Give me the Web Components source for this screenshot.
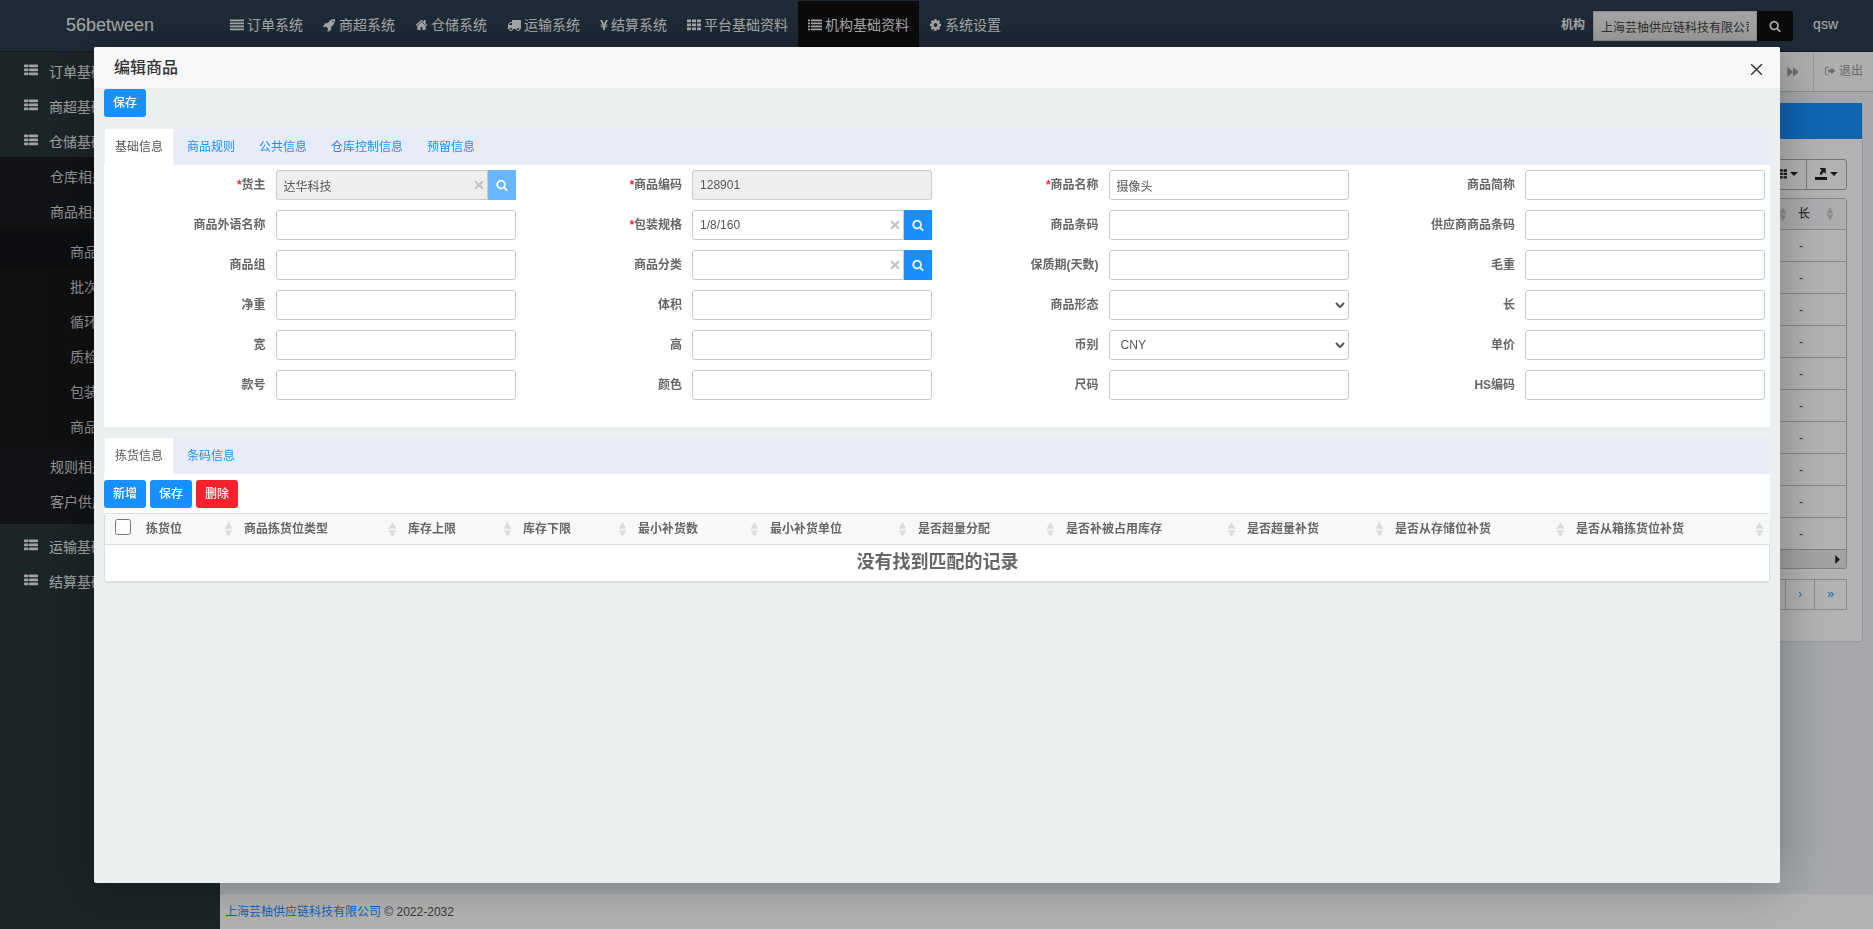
<!DOCTYPE html>
<html lang="zh-CN">
<head>
<meta charset="utf-8">
<title>编辑商品</title>
<style>
  html, body { margin: 0; height: 100%; }
  body {
    font: 12px/18px "Liberation Sans", "Noto Sans CJK SC", sans-serif;
    color: #555;
    overflow: hidden;
  }
</style>
</head>
<body>
<wms-app></wms-app>

<script>
const ICONS = {
  lines: '<path d="M0 192h1792v224H0zM0 576h1792v224H0zM0 960h1792v224H0zM0 1344h1792v224H0z"/>',
  rocket: '<path d="M1440 448q0-40-28-68t-68-28-68 28-28 68 28 68 68 28 68-28 28-68zm224-288q0 249-75.5 430.5t-253.5 360.5q-81 80-195 176l-20 379q-2 16-16 26l-384 224q-7 4-16 4-12 0-23-9l-64-64q-13-14-8-32l85-276-281-281-276 85q-3 1-9 1-14 0-23-9l-64-64q-17-19-5-39l224-384q10-14 26-16l379-20q96-114 176-195 188-187 358-258t431-71q14 0 24 9.5t10 22.5z"/>',
  home: '<path d="M1472 992v480q0 26-19 45t-45 19h-384v-384h-256v384h-384q-26 0-45-19t-19-45v-480q0-1 .5-3t.5-3l575-474 575 474q1 2 1 6zm223-69l-62 74q-8 9-21 11h-3q-13 0-21-7l-692-577-692 577q-12 8-24 7-13-2-21-11l-62-74q-8-10-7-23.5t11-21.5l719-599q32-26 76-26t76 26l244 204v-195q0-14 9-23t23-9h192q14 0 23 9t9 23v408l219 182q10 8 11 21.5t-7 23.5z"/>',
  truck: '<path d="M640 1408q0-52-38-90t-90-38-90 38-38 90 38 90 90 38 90-38 38-90zm-384-512h384v-256h-158q-13 0-22 9l-195 195q-9 9-9 22v30zm1280 512q0-52-38-90t-90-38-90 38-38 90 38 90 90 38 90-38 38-90zm256-1088v1024q0 15-4 26.5t-13.5 18.5-16.5 11.5-23.5 6-22.5 2-25.5 0-22.5-.5q0 106-75 181t-181 75-181-75-75-181h-384q0 106-75 181t-181 75-181-75-75-181h-64q-3 0-22.5.5t-25.5 0-22.5-2-23.5-6-16.5-11.5-13.5-18.5-4-26.5q0-26 19-45t45-19v-320q0-8-.5-35t0-38 2.5-34.5 6.5-37 14-30.5 22.5-30l198-198q19-19 50.5-32t58.5-13h160v-192q0-26 19-45t45-19h1024q26 0 45 19t19 45z"/>',
  yen: '<path d="M0 160h440l456 560 456-560h440l-560 650h390v150h-500v120h500v150h-500v402H660v-402H160v-150h500V960H160V810h400z"/>',
  grid: '<path d="M0 192h512v352H0zM640 192h512v352H640zM1280 192h512v352h-512zM0 704h512v352H0zM640 704h512v352H640zM1280 704h512v352h-512zM0 1216h512v352H0zM640 1216h512v352H640zM1280 1216h512v352h-512z"/>',
  list: '<path d="M0 192h256v224H0zM384 192h1408v224H384zM0 576h256v224H0zM384 576h1408v224H384zM0 960h256v224H0zM384 960h1408v224H384zM0 1344h256v224H0zM384 1344h1408v224H384z"/>',
  cog: '<path d="M1152 896q0-106-75-181t-181-75-181 75-75 181 75 181 181 75 181-75 75-181zm512-109v222q0 12-8 23t-20 13l-185 28q-19 54-39 91 35 50 107 138 10 12 10 25t-9 23q-27 37-99 108t-94 71q-12 0-26-9l-138-108q-44 23-91 38-16 136-29 186-7 28-36 28h-222q-14 0-24.5-8.5t-11.5-21.5l-28-184q-49-16-90-37l-141 107q-10 9-25 9-14 0-25-11-126-114-165-168-7-10-7-23 0-12 8-23 15-21 51-66.5t54-70.5q-27-50-41-99l-183-27q-13-2-21-12.5t-8-23.5v-222q0-12 8-23t19-13l186-28q14-46 39-92-40-57-107-138-10-12-10-24 0-10 9-23 26-36 98.5-107.5t94.5-71.5q13 0 26 10l138 107q44-23 91-38 16-136 29-186 7-28 36-28h222q14 0 24.5 8.5t11.5 21.5l28 184q49 16 90 37l142-107q9-9 24-9 13 0 25 10 129 119 165 170 7 8 7 22 0 12-8 23-15 21-51 66.5t-54 70.5q26 50 41 98l183 28q13 2 21 12.5t8 23.5z"/>',
  thlist: '<path d="M96 192h384q96 0 96 96v160q0 96-96 96H96q-96 0-96-96V288q0-96 96-96zM736 192h960q96 0 96 96v160q0 96-96 96H736q-96 0-96-96V288q0-96 96-96zM96 704h384q96 0 96 96v160q0 96-96 96H96q-96 0-96-96V800q0-96 96-96zM736 704h960q96 0 96 96v160q0 96-96 96H736q-96 0-96-96V800q0-96 96-96zM96 1216h384q96 0 96 96v160q0 96-96 96H96q-96 0-96-96v-160q0-96 96-96zM736 1216h960q96 0 96 96v160q0 96-96 96H736q-96 0-96-96v-160q0-96 96-96z"/>',
  search: '<path d="M1216 832q0-185-131.5-316.5t-316.5-131.5-316.5 131.5-131.5 316.5 131.5 316.5 316.5 131.5 316.5-131.5 131.5-316.5zm512 832q0 52-38 90t-90 38q-54 0-90-38l-343-342q-179 124-399 124-143 0-273.5-55.5t-225-150-150-225-55.5-273.5 55.5-273.5 150-225 225-150 273.5-55.5 273.5 55.5 225 150 150 225 55.5 273.5q0 220-124 399l343 343q37 37 37 90z"/>',
  forward: '<path d="M64 192l832 704-832 704zM896 192l832 704-832 704z"/>',
  exit: '<path d="M700 1400v130H420q-290 0-290-290V560q0-290 290-290h280v130H420q-150 0-150 160v680q0 160 150 160z"/><path d="M1700 896l-620 540v-310H640V666h440V356z"/>',
  remove: '<path d="M320 96l576 520 576-520 260 260-536 540 536 540-260 260-576-520-576 520-260-260 536-540L60 356z"/>',
  close: '<path d="M160 160L1632 1632M1632 160L160 1632" fill="none" stroke="currentColor" stroke-width="190"/>',
  down: '<path d="M0 448h1792L896 1344z"/>',
  right: '<path d="M448 0v1792L1344 896z"/>',
  export: '<path d="M0 1344h1792v448H0zM704 0h896v896l-288-288-160 160 -128 224H680V960l144-64-120-200 288-288z"/>',
  sorter: '<path d="M896 0l800 820H96zM96 972h1600L896 1792z"/>'
};

function define(name, render) {
  customElements.define(name, class extends HTMLElement {
    connectedCallback() {
      if (this.shadowRoot) return;
      const template = document.createElement('template');
      template.innerHTML = render(this);
      this.attachShadow({ mode: 'open' }).append(template.content.cloneNode(true));
    }
  });
}

define('ui-icon', el => `
  <style>
    :host { display: inline-block; flex: none; width: 14px; height: 14px; }
    svg { display: block; width: 100%; height: 100%; fill: currentColor; }
  </style>
  <svg viewBox="0 0 1792 1792" preserveAspectRatio="none" aria-hidden="true">${ICONS[el.getAttribute('name')]}</svg>`);

define('nav-item', el => `
  <style>
    :host { display: block; }
    a {
      display: flex; align-items: center; gap: 3px; height: 51px; padding: 0 10px 3px;
      box-sizing: border-box;
      color: #f3f3f3; font-size: 14px; text-decoration: none; white-space: nowrap;
    }
    :host([active]) a { background: #111; }
    ui-icon[name=yen] { width: 8px; height: 12px; }
    ui-icon[name=rocket], ui-icon[name=home], ui-icon[name=cog] { width: 13px; height: 14px; }
  </style>
  <a href="#"><ui-icon name="${el.getAttribute('icon')}"></ui-icon><slot></slot></a>`);

define('app-header', () => `
  <style>
    :host {
      display: flex; height: 52px; box-sizing: border-box; padding-top: 1px;
      background: #2c3e50; border-bottom: 1px solid #1b2733;
    }
    .brand {
      width: 220px; flex: none; text-align: center; line-height: 48px;
      font-size: 18px; color: #f3f3f3; text-decoration: none;
    }
    nav { display: flex; flex: 1; }
    form { display: flex; margin: 10px 20px 0 0; height: 30px; }
    label { font-weight: bold; color: #f3f3f3; line-height: 28px; margin-right: 8px; }
    input {
      width: 164px; height: 30px; box-sizing: border-box; border: 1px solid #ccc;
      padding: 0 7px; background: #eee; color: #444; font: inherit;
    }
    button {
      width: 36px; border: 0; padding: 0; background: #111; color: #fff;
      border-radius: 0 3px 3px 0; display: grid; place-items: center;
    }
    button ui-icon { width: 12px; height: 12px; }
    .user { margin-right: 35px; line-height: 46px; font-size: 14px; color: #f3f3f3; text-decoration: none; }
  </style>
  <a class="brand" href="#">56between</a>
  <nav>
    <nav-item icon="lines">订单系统</nav-item>
    <nav-item icon="rocket">商超系统</nav-item>
    <nav-item icon="home">仓储系统</nav-item>
    <nav-item icon="truck">运输系统</nav-item>
    <nav-item icon="yen">结算系统</nav-item>
    <nav-item icon="grid">平台基础资料</nav-item>
    <nav-item icon="list" active>机构基础资料</nav-item>
    <nav-item icon="cog">系统设置</nav-item>
  </nav>
  <form>
    <label for="org">机构</label>
    <input id="org" value="上海芸柚供应链科技有限公司">
    <button type="button" aria-label="搜索"><ui-icon name="search"></ui-icon></button>
  </form>
  <a class="user" href="#">qsw</a>`);

define('side-item', el => `
  <style>
    :host { display: block; }
    a {
      display: flex; align-items: center; gap: 11px; height: 35px; padding: 4px 0 0 24px;
      box-sizing: border-box; color: #e6e6e6; font-size: 14px; text-decoration: none;
    }
    :host([level="2"]) a { padding-left: 50px; color: #d8d8d8; }
    :host([level="3"]) a { padding-left: 70px; color: #d0d0d0; }
    :host([active]) a { background: #121419; }
    ui-icon { margin-bottom: 3px; }
  </style>
  <a href="#">${el.hasAttribute('level') ? '' : '<ui-icon name="thlist"></ui-icon>'}<slot></slot></a>`);

define('side-nav', () => `
  <style>
    :host { display: block; background: #283438; }
    .sub { background: #191b20; padding-bottom: 7px; margin-bottom: 3px; }
    .leaf { background: #171717; padding: 5px 0; }
  </style>
  <nav>
    <side-item>订单基础</side-item>
    <side-item>商超基础</side-item>
    <side-item>仓储基础</side-item>
    <div class="sub">
      <side-item level="2">仓库相关</side-item>
      <side-item level="2">商品相关</side-item>
      <div class="leaf">
        <side-item level="3" active>商品</side-item>
        <side-item level="3">批次</side-item>
        <side-item level="3">循环</side-item>
        <side-item level="3">质检</side-item>
        <side-item level="3">包装</side-item>
        <side-item level="3">商品</side-item>
      </div>
      <side-item level="2">规则相关</side-item>
      <side-item level="2">客户供应</side-item>
    </div>
    <side-item>运输基础</side-item>
    <side-item>结算基础</side-item>
  </nav>`);

define('list-page', () => `
  <style>
    :host { display: flex; flex-direction: column; min-width: 0; background: #ecf0f5; }
    .tabs {
      display: flex; justify-content: flex-end; height: 39px; background: #fafafa;
      border-bottom: 1px solid #ccc; color: #999;
    }
    .tabs button, .tabs a {
      display: flex; align-items: center; gap: 3px; border: 0; background: none;
      color: inherit; font: inherit; text-decoration: none; padding: 0 10px;
    }
    .tabs button { width: 48px; justify-content: flex-end; padding-right: 14px; }
    .tabs ui-icon { width: 12px; height: 12px; }
    .tabs a { border-left: 1px solid #ddd; padding-bottom: 2px; }
    .card { margin: 11px 10px 0 15px; background: #fff; padding-bottom: 31px; border-radius: 3px; border: solid #ddd; border-width: 0 1px 1px 0; }
    .banner { height: 36px; background: #1890ff; }
    .body { padding: 20px 15px 0; }
    .tools { display: flex; justify-content: flex-end; }
    .tools button {
      display: flex; align-items: center; justify-content: center; gap: 3px; width: 41px; height: 31px;
      background: #fff; border: 1px solid #aaa; margin-left: -1px; padding: 0 0 2px; color: #222;
    }
    .tools button:last-child { border-radius: 0 3px 3px 0; }
    .tools ui-icon { width: 12px; height: 12px; }
    .tools ui-icon[name=down] { width: 8px; height: 8px; }
    .frame { margin-top: 8px; border: 1px solid #bbb; border-radius: 3px; }
    table { width: 100%; border-collapse: collapse; table-layout: fixed; }
    th { height: 30px; padding: 0; background: #f8f8fb; font-weight: 500; text-align: left; color: #444; }
    th div { display: flex; align-items: center; justify-content: space-between; padding: 0 12px 0 9px; }
    th ui-icon { width: 8px; height: 14px; color: #ccc; }
    td { height: 31px; padding: 0 0 0 10px; border-top: 1px solid #c4c4c4; color: #333; }
    .bar { display: flex; align-items: center; justify-content: flex-end; height: 18px; background: #e8e8e8; border-top: 1px solid #bbb; padding-right: 4px; color: #222; }
    .bar ui-icon { width: 9px; height: 9px; }
    .pages { display: flex; justify-content: flex-end; margin-top: 10px; }
    .pages a {
      width: 33px; line-height: 29px; text-align: center; border: 1px solid #c8c8c8;
      margin-left: -1px; color: #1890ff; text-decoration: none; box-sizing: border-box;
    }
    .pages .next { width: 30px; }
    footer {
      margin-top: auto; height: 35px; line-height: 37px; padding-left: 5px; background: #fff;
      box-sizing: border-box; color: #555;
    }
    footer a { color: #1890ff; text-decoration: none; }
  </style>
  <div class="tabs">
    <button type="button" aria-label="下一个"><ui-icon name="forward"></ui-icon></button>
    <a href="#"><ui-icon name="exit"></ui-icon>退出</a>
  </div>
  <section class="card">
    <div class="banner"></div>
    <div class="body">
      <div class="tools">
        <button type="button" aria-label="列"><ui-icon name="grid"></ui-icon><ui-icon name="down"></ui-icon></button>
        <button type="button" aria-label="导出"><ui-icon name="export"></ui-icon><ui-icon name="down"></ui-icon></button>
      </div>
      <div class="frame">
        <table>
          <colgroup><col><col style="width:57px"></colgroup>
          <thead><tr><th><div style="padding-right:2px"><span></span><ui-icon name="sorter"></ui-icon></div></th><th><div>长<ui-icon name="sorter"></ui-icon></div></th></tr></thead>
          <tbody>${'<tr><td></td><td>-</td></tr>'.repeat(10)}</tbody>
        </table>
        <div class="bar"><ui-icon name="right"></ui-icon></div>
      </div>
      <div class="pages"><a href="#" aria-label="页"></a><a class="next" href="#">›</a><a href="#">»</a></div>
    </div>
  </section>
  <footer><a href="#">上海芸柚供应链科技有限公司</a> © 2022-2032</footer>`);

define('action-button', () => `
  <style>
    :host { display: inline-block; }
    button {
      display: block; height: 28px; padding: 0 9px; border: 0; border-radius: 3px;
      background: #1890ff; color: #fff; font: inherit; font-weight: 500; line-height: 28px;
    }
    :host([danger]) button { background: #f5222d; }
  </style>
  <button type="button"><slot></slot></button>`);

define('tab-strip', el => `
  <style>
    :host { display: flex; height: 37px; background: #e8ecf6; }
    a {
      margin-right: 2px; padding: 0 10px; border: 1px solid transparent; border-bottom: 0;
      line-height: 36px; color: #1890ff; text-decoration: none; white-space: nowrap;
    }
    a:first-of-type { background: #fff; border-color: #eef0f4; color: #555; }
  </style>
  ${el.getAttribute('tabs').split(',').map(t => `<a href="#">${t}</a>`).join('')}`);

define('form-field', el => {
  const at = n => el.getAttribute(n) || '';
  const has = n => el.hasAttribute(n);
  const control = has('select')
    ? `<select id="c"><option>${at('value')}</option></select>`
    : `<input id="c" value="${at('value')}" ${has('disabled') ? 'disabled' : ''}>`;
  const lookup = has('lookup')
    ? `<ui-icon class="clear" name="remove"></ui-icon><button type="button" aria-label="选择" ${has('disabled') ? 'disabled' : ''}><ui-icon name="search"></ui-icon></button>`
    : '';
  return `
  <style>
    :host { display: grid; grid-template-columns: 2fr 3fr; align-items: center; }
    label { text-align: right; padding-right: 5px; font-weight: bold; color: #666; }
    i { font-style: normal; color: #f5222d; }
    .box { display: flex; align-items: center; position: relative; padding: 0 5px; }
    input, select {
      flex: 1; min-width: 0; height: 30px; box-sizing: border-box; border: 1px solid #c9c9c9;
      border-radius: 3px; padding: 0 7px; background: #fff; color: #555; font: inherit;
    }
    input:disabled { background: #eee; }
    :host([lookup]) input { border-radius: 3px 0 0 3px; }
    button {
      width: 28px; height: 30px; padding: 0; border: 0; background: #1890ff; color: #fff;
      display: grid; place-items: center;
    }
    button:disabled { background: #69b5ff; }
    button ui-icon { width: 12px; height: 12px; }
    .clear { position: absolute; right: 37px; width: 10px; height: 10px; color: #c4c4c4; }
  </style>
  <label for="c">${has('required') ? '<i>*</i>' : ''}${at('label')}</label>
  <div class="box">${control}${lookup}</div>`;
});

define('picking-table', () => {
  const cols = [['拣货位', 98], ['商品拣货位类型', 164], ['库存上限', 115], ['库存下限', 115], ['最小补货数', 132],
    ['最小补货单位', 148], ['是否超量分配', 148], ['是否补被占用库存', 181], ['是否超量补货', 148],
    ['是否从存储位补货', 181], ['是否从箱拣货位补货', 201]];
  return `
  <style>
    :host { display: block; border: 1px solid #ddd; border-bottom-width: 2px; border-radius: 3px; background: #fff; }
    table { width: 100%; border-collapse: collapse; table-layout: fixed; }
    th { height: 30px; padding: 0 4px 0 7px; background: #f8f8fb; font-weight: bold; color: #666; text-align: left; white-space: nowrap; border-bottom: 1px solid #ddd; }
    th:last-child { padding-right: 6px; }
    th div { display: flex; align-items: center; justify-content: space-between; }
    th ui-icon { width: 9px; height: 15px; color: #ddd; }
    input { display: block; width: 16px; height: 16px; margin: 0 0 5px 3px; }
    td { height: 36px; padding: 0 0 2px; box-sizing: border-box; text-align: center; font-size: 18px; font-weight: bold; color: #666; }
  </style>
  <table>
    <colgroup><col style="width:34px">${cols.map(c => `<col style="width:${c[1]}px">`).join('')}</colgroup>
    <thead><tr><th><input type="checkbox" aria-label="全选"></th>${cols.map(c => `<th><div>${c[0]}<ui-icon name="sorter"></ui-icon></div></th>`).join('')}</tr></thead>
    <tbody><tr><td colspan="12">没有找到匹配的记录</td></tr></tbody>
  </table>`;
});

define('edit-dialog', () => `
  <style>
    :host {
      position: fixed; inset: 47px 93px 46px 94px; display: flex; flex-direction: column; overflow: hidden;
      background: #ebefef; border-radius: 2px; box-shadow: 1px 1px 50px rgba(0, 0, 0, .3);
    }
    header { display: flex; align-items: center; justify-content: space-between; height: 41px; flex: none; padding: 0 17px 0 20px; background: #f8f8f8; }
    h1 { margin: 0; font-size: 16px; line-height: 20px; font-weight: 500; color: #333; }
    header button { border: 0; padding: 0; background: none; color: #2e2d3c; display: flex; margin-top: 4px; }
    header ui-icon { width: 13px; height: 13px; }
    main { padding: 1px 10px 0; overflow: auto; }
    .save { display: flex; padding-bottom: 11px; }
    .grid {
      display: grid; grid-template-columns: repeat(4, 1fr); row-gap: 10px;
      padding: 5px 0 27px; margin-bottom: 10px; background: #fff;
    }
    .panel { background: #fff; }
    .row { display: flex; gap: 4px; padding: 6px 0 5px; }
  </style>
  <header><h1>编辑商品</h1><button type="button" aria-label="关闭"><ui-icon name="close"></ui-icon></button></header>
  <main>
    <div class="save"><action-button>保存</action-button></div>
    <tab-strip tabs="基础信息,商品规则,公共信息,仓库控制信息,预留信息"></tab-strip>
    <div class="grid">
      <form-field label="货主" required lookup disabled value="达华科技"></form-field>
      <form-field label="商品编码" required disabled value="128901"></form-field>
      <form-field label="商品名称" required value="摄像头"></form-field>
      <form-field label="商品简称"></form-field>
      <form-field label="商品外语名称"></form-field>
      <form-field label="包装规格" required lookup value="1/8/160"></form-field>
      <form-field label="商品条码"></form-field>
      <form-field label="供应商商品条码"></form-field>
      <form-field label="商品组"></form-field>
      <form-field label="商品分类" lookup></form-field>
      <form-field label="保质期(天数)"></form-field>
      <form-field label="毛重"></form-field>
      <form-field label="净重"></form-field>
      <form-field label="体积"></form-field>
      <form-field label="商品形态" select></form-field>
      <form-field label="长"></form-field>
      <form-field label="宽"></form-field>
      <form-field label="高"></form-field>
      <form-field label="币别" select value="CNY"></form-field>
      <form-field label="单价"></form-field>
      <form-field label="款号"></form-field>
      <form-field label="颜色"></form-field>
      <form-field label="尺码"></form-field>
      <form-field label="HS编码"></form-field>
    </div>
    <tab-strip tabs="拣货信息,条码信息"></tab-strip>
    <div class="panel">
      <div class="row"><action-button>新增</action-button><action-button>保存</action-button><action-button danger>删除</action-button></div>
      <picking-table></picking-table>
    </div>
  </main>`);

define('wms-app', () => `
  <style>
    :host { display: grid; grid-template: auto 1fr / 220px 1fr; height: 100vh; }
    app-header { grid-column: 1 / -1; }
    .shade { position: fixed; inset: 0; background: rgba(0, 0, 0, .3); }
  </style>
  <app-header></app-header>
  <side-nav></side-nav>
  <list-page></list-page>
  <div class="shade"></div>
  <edit-dialog role="dialog" aria-label="编辑商品"></edit-dialog>`);
</script>
</body>
</html>
